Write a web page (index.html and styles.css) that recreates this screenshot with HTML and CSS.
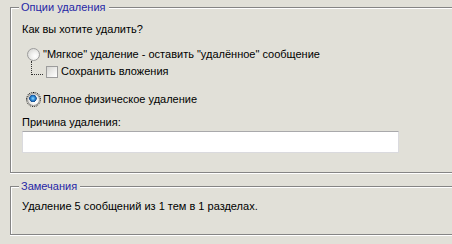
FILE: index.html
```html
<!DOCTYPE html>
<html lang="ru">
<head>
    <meta charset="UTF-8">
    <title>Удаление сообщений</title>
    <link rel="stylesheet" href="styles.css">
</head>
<body>
    <fieldset class="group group-options">
        <legend>Опции удаления</legend>
        <p class="question">Как вы хотите удалить?</p>

        <label class="option option-soft">
            <input type="radio" name="mode">
            <span>"Мягкое" удаление - оставить "удалённое" сообщение</span>
        </label>
        <div class="sub-option">
            <span class="tree-line"></span>
            <label class="option">
                <input type="checkbox" name="keep_attachments">
                <span>Сохранить вложения</span>
            </label>
        </div>

        <label class="option option-hard">
            <input type="radio" name="mode" class="focused" checked>
            <span>Полное физическое удаление</span>
        </label>

        <label class="field-label" for="reason">Причина удаления:</label>
        <input class="reason" type="text" id="reason">
    </fieldset>

    <fieldset class="group group-notes">
        <legend>Замечания</legend>
        <p class="note">Удаление 5 сообщений из 1 тем в 1 разделах.</p>
    </fieldset>
</body>
</html>
```

FILE: styles.css
```css
html, body {
    margin: 0;
    padding: 0;
    overflow: hidden;
}
body {
    background-color: #e1e0d8;
    font-family: "Liberation Sans", Arial, sans-serif;
    font-size: 11px;
    line-height: 13px;
    color: #000;
    height: 244px;
}

/* etched group box */
.group {
    margin: 1px -20px 0 10px;
    padding: 9px 0 19px 11px;
    border: 1px solid #858585;
    border-right: none;
    box-shadow: inset 1px 1px 0 #fff, 0 1px 0 #fff;
    min-width: 0;
}
.group legend {
    margin-left: -3px;
    padding: 0 3px 0 2px;
    color: #2626a6;
    background-color: #e1e0d8;
}
.group-notes {
    margin-top: 7px;
    padding-top: 7px;
    padding-bottom: 21px;
}

.question, .note {
    margin: 0;
}

.option {
    display: flex;
    align-items: center;
    height: 15px;
    gap: 3px;
}
.option-soft {
    margin: 11px 0 0 5px;
}
.option-hard {
    margin: 13px 0 0 5px;
}

/* radio buttons */
.option input[type="radio"] {
    appearance: none;
    -webkit-appearance: none;
    margin: 0;
    width: 13px;
    height: 13px;
    border-radius: 50%;
    border: 1px solid #9c9c9c;
    box-sizing: border-box;
    background: radial-gradient(circle at 65% 65%, #ffffff 0%, #f2f2f0 35%, #cfcfcc 100%);
}
.option input[type="radio"]:checked {
    background:
        radial-gradient(circle at 45% 40%, #8fd8ff 0, #2c8ad8 2px, #174f92 3.5px, transparent 4px),
        radial-gradient(circle at 65% 65%, #ffffff 0%, #f2f2f0 35%, #cfcfcc 100%);
}
.option input.focused {
    outline: 1px dotted #000;
    outline-offset: 0;
}

/* checkbox with tree connector */
.sub-option {
    display: flex;
    align-items: flex-end;
    margin: -1px 0 0 9px;
}
.tree-line {
    width: 11px;
    height: 13px;
    border-left: 1px dotted #333;
    border-bottom: 1px dotted #333;
    margin-bottom: 4px;
    margin-right: 3px;
}
.option input[type="checkbox"] {
    appearance: none;
    -webkit-appearance: none;
    margin: 0;
    width: 12px;
    height: 12px;
    border: 1px solid #9c9c9c;
    box-sizing: border-box;
    background: linear-gradient(135deg, #d6d6d2 0%, #f0f0ee 60%, #ffffff 100%);
}

.field-label {
    display: block;
    margin-top: 9px;
}
.reason {
    display: block;
    box-sizing: border-box;
    width: 377px;
    height: 22px;
    margin: 2px 0 0 0;
    border: 1px solid #dadade;
    border-top-color: #a9a9ab;
    background-color: #fff;
    font: inherit;
}
```
